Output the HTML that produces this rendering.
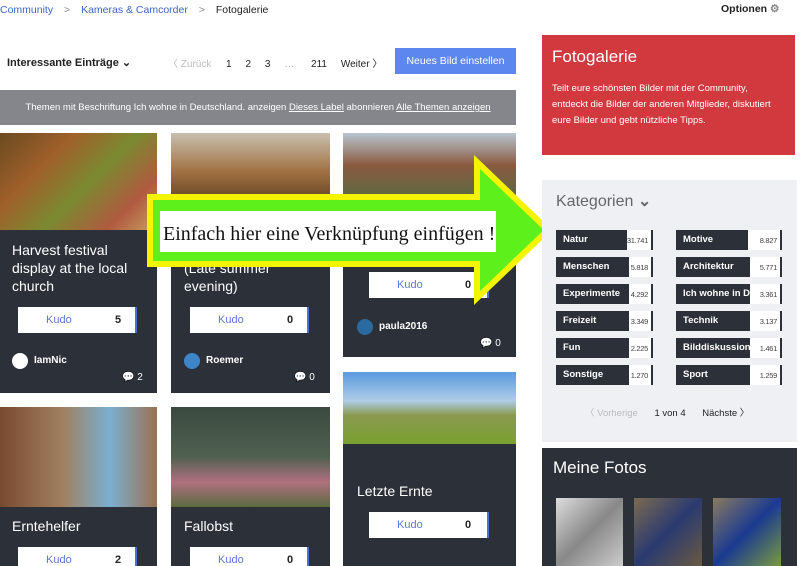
<!DOCTYPE html>
<html><head><meta charset="utf-8"><style>
*{margin:0;padding:0;box-sizing:border-box}
html,body{width:800px;height:566px;overflow:hidden}
body{background:#fff;font-family:"Liberation Sans",sans-serif;position:relative;color:#222}
.a{position:absolute}
.card{position:absolute;background:#2c3038}
.title{position:absolute;color:#fff;font-size:14px;line-height:18px}
.kudo{position:absolute;background:#fff;height:26px;font-size:11px;border-right:2px solid #4a6fd6}
.kudo span{position:absolute;top:7px}
.kudo .k{color:#5a78d8}
.kudo .n{color:#222;font-weight:bold}
.user{position:absolute;color:#fff;font-size:10px;font-weight:bold}
.av{position:absolute;width:16px;height:16px;border-radius:50%;background:#3f86c9}
.cm{position:absolute;color:#fff;font-size:10px}
.cat{position:absolute;height:20px;width:97px;background:#fff;font-size:9px;border-right:2px solid #2c3038}
.cat b{position:absolute;left:0;top:0;height:20px;background:#2c3038;color:#fff;font-size:9.5px;padding:4px 0 0 7px;overflow:hidden;white-space:nowrap}
.cat i{position:absolute;right:3px;top:6px;font-style:normal;color:#444;font-size:7.5px;letter-spacing:-0.3px}
</style></head><body>
<div class="a" style="left:0;top:4px;font-size:10.5px;color:#3b66c4">Community <span style="color:#888;margin:0 8px">&gt;</span> Kameras &amp; Camcorder <span style="color:#888;margin:0 8px">&gt;</span> <span style="color:#222">Fotogalerie</span></div>
<div class="a" style="left:721px;top:3px;font-size:10.5px;font-weight:bold">Optionen <span style="color:#888">⚙</span></div>
<div class="a" style="left:7px;top:56px;font-size:11px;font-weight:bold">Interessante Einträge ⌄</div>
<div class="a" style="left:168px;top:55px;font-size:10px;color:#bbb">〈 Zurück</div>
<div class="a" style="left:226px;top:55px;font-size:10px">1 &nbsp;&nbsp;&nbsp; 2 &nbsp;&nbsp;&nbsp; 3 &nbsp;&nbsp;&nbsp; <span style="color:#aaa">…</span> &nbsp;&nbsp;&nbsp;&nbsp; 211 &nbsp;&nbsp;&nbsp; Weiter 〉</div>
<div class="a" style="left:395px;top:48px;width:121px;height:26px;background:#5b87ee;color:#fff;font-size:10.5px;text-align:center;line-height:26px">Neues Bild einstellen</div>
<div class="a" style="left:0;top:90px;width:516px;height:35px;background:#85868c;color:#fff;font-size:9.5px;text-align:center;line-height:35px">Themen mit Beschriftung Ich wohne in Deutschland. anzeigen <u>Dieses Label</u> abonnieren <u>Alle Themen anzeigen</u></div>

<div class="card" style="left:0;top:133px;width:157px;height:260px"></div>
<div class="a" style="left:0;top:133px;width:157px;height:97px;background:linear-gradient(135deg,#6a4a20,#a0602a 30%,#7a8a30 55%,#b05a40 80%,#c8a060)"></div>
<div class="title" style="left:12px;top:241px">Harvest festival<br>display at the local<br>church</div>
<div class="kudo" style="left:18px;top:307px;width:119px"><span class="k" style="left:28px">Kudo</span><span class="n" style="left:97px">5</span></div>
<div class="av" style="left:12px;top:353px;background:#fff"></div>
<div class="user" style="left:34px;top:355px">IamNic</div>
<div class="cm" style="left:122px;top:372px">💬 2</div>

<div class="card" style="left:171px;top:133px;width:159px;height:260px"></div>
<div class="a" style="left:171px;top:133px;width:159px;height:65px;background:linear-gradient(180deg,#c8bfb0,#a07040 60%,#6a4a2a)"></div>
<div class="title" style="left:184px;top:259px">(Late summer<br>evening)</div>
<div class="kudo" style="left:190px;top:307px;width:119px"><span class="k" style="left:28px">Kudo</span><span class="n" style="left:97px">0</span></div>
<div class="av" style="left:184px;top:353px"></div>
<div class="user" style="left:206px;top:355px">Roemer</div>
<div class="cm" style="left:294px;top:372px">💬 0</div>

<div class="card" style="left:343px;top:133px;width:173px;height:224px"></div>
<div class="a" style="left:343px;top:133px;width:173px;height:65px;background:linear-gradient(180deg,#b8c4d0,#8a5a40 50%,#5a6a40)"></div>
<div class="kudo" style="left:369px;top:272px;width:120px"><span class="k" style="left:28px">Kudo</span><span class="n" style="left:96px">0</span></div>
<div class="av" style="left:357px;top:319px;background:#2a6aa0"></div>
<div class="user" style="left:379px;top:321px">paula2016</div>
<div class="cm" style="left:480px;top:338px">💬 0</div>

<div class="card" style="left:343px;top:372px;width:173px;height:194px"></div>
<div class="a" style="left:343px;top:372px;width:173px;height:72px;background:linear-gradient(180deg,#5a9ae0,#b0cce8 40%,#8a9a50 60%,#7aa030)"></div>
<div class="title" style="left:357px;top:482px">Letzte Ernte</div>
<div class="kudo" style="left:369px;top:512px;width:120px"><span class="k" style="left:28px">Kudo</span><span class="n" style="left:96px">0</span></div>

<div class="card" style="left:0;top:407px;width:157px;height:159px"></div>
<div class="a" style="left:0;top:407px;width:157px;height:100px;background:linear-gradient(90deg,#7a4a30,#a08060 40%,#7ab0d0 70%,#9a7050)"></div>
<div class="title" style="left:12px;top:517px">Erntehelfer</div>
<div class="kudo" style="left:18px;top:547px;width:119px;height:19px"><span class="k" style="left:28px">Kudo</span><span class="n" style="left:97px">2</span></div>

<div class="card" style="left:171px;top:407px;width:159px;height:159px"></div>
<div class="a" style="left:171px;top:407px;width:159px;height:100px;background:linear-gradient(180deg,#3a4a40,#506050 50%,#b07080 75%,#5a6a40)"></div>
<div class="title" style="left:184px;top:517px">Fallobst</div>
<div class="kudo" style="left:190px;top:547px;width:119px;height:19px"><span class="k" style="left:28px">Kudo</span><span class="n" style="left:97px">0</span></div>

<svg class="a" style="left:0;top:0" width="800" height="566"><polygon points="150,197 477,197 477,162 548,230 477,298 477,264 150,264" fill="#5ef01a" stroke="#f4f400" stroke-width="6" stroke-linejoin="miter"/>
<rect x="160" y="211" width="336" height="41" fill="#fff"/>
<text x="163" y="240" font-family="Liberation Serif,serif" font-size="20" fill="#111">Einfach hier eine Verknüpfung einfügen !</text></svg>

<div class="a" style="left:542px;top:35px;width:253px;height:120px;background:#d2393e;color:#fff">
<div style="position:absolute;left:10px;top:12px;font-size:17px">Fotogalerie</div>
<div style="position:absolute;left:10px;top:46px;font-size:9.5px;line-height:16px;width:228px">Teilt eure schönsten Bilder mit der Community, entdeckt die Bilder der anderen Mitglieder, diskutiert eure Bilder und gebt nützliche Tipps.</div></div>
<div class="a" style="left:542px;top:180px;width:255px;height:262px;background:#eef0f3"></div>
<div class="a" style="left:556px;top:191px;font-size:16px;color:#666">Kategorien <b>⌄</b></div>
<div class="cat" style="left:556px;top:230px"><b style="width:71px">Natur</b><i>31.741</i></div>
<div class="cat" style="left:556px;top:257px"><b style="width:73px">Menschen</b><i>5.818</i></div>
<div class="cat" style="left:556px;top:284px"><b style="width:73px">Experimente</b><i>4.292</i></div>
<div class="cat" style="left:556px;top:311px"><b style="width:73px">Freizeit</b><i>3.349</i></div>
<div class="cat" style="left:556px;top:338px"><b style="width:73px">Fun</b><i>2.225</i></div>
<div class="cat" style="left:556px;top:365px"><b style="width:73px">Sonstige</b><i>1.270</i></div>
<div class="cat" style="left:676px;top:230px;width:106px"><b style="width:72px">Motive</b><i>8.827</i></div>
<div class="cat" style="left:676px;top:257px;width:106px"><b style="width:74px">Architektur</b><i>5.771</i></div>
<div class="cat" style="left:676px;top:284px;width:106px"><b style="width:74px">Ich wohne in D.</b><i>3.361</i></div>
<div class="cat" style="left:676px;top:311px;width:106px"><b style="width:74px">Technik</b><i>3.137</i></div>
<div class="cat" style="left:676px;top:338px;width:106px"><b style="width:74px">Bilddiskussion</b><i>1.461</i></div>
<div class="cat" style="left:676px;top:365px;width:106px"><b style="width:74px">Sport</b><i>1.259</i></div>
<div class="a" style="left:585px;top:405px;font-size:9.5px;color:#bbb">〈 Vorherige <span style="color:#222;margin-left:14px">1 von 4</span> <span style="color:#222;margin-left:14px">Nächste 〉</span></div>
<div class="a" style="left:542px;top:448px;width:255px;height:118px;background:#2c3038"></div>
<div class="a" style="left:553px;top:458px;font-size:17px;color:#fff">Meine Fotos</div>
<div class="a" style="left:556px;top:498px;width:67px;height:68px;background:linear-gradient(135deg,#ddd,#888 50%,#ccc)"></div>
<div class="a" style="left:634px;top:498px;width:68px;height:68px;background:linear-gradient(135deg,#7a6a50,#2a3a70 50%,#6a5a40)"></div>
<div class="a" style="left:713px;top:498px;width:68px;height:68px;background:linear-gradient(135deg,#8a7a60,#1a3a90 50%,#7a9a40)"></div>
</body></html>
